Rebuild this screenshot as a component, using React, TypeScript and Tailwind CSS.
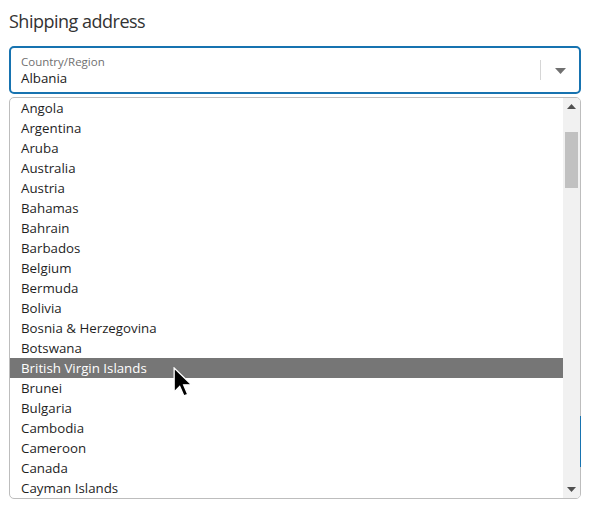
import React from "react";

const countries = [
  "Angola",
  "Argentina",
  "Aruba",
  "Australia",
  "Austria",
  "Bahamas",
  "Bahrain",
  "Barbados",
  "Belgium",
  "Bermuda",
  "Bolivia",
  "Bosnia & Herzegovina",
  "Botswana",
  "British Virgin Islands",
  "Brunei",
  "Bulgaria",
  "Cambodia",
  "Cameroon",
  "Canada",
  "Cayman Islands",
];

export default function App() {
  return (
    <div
      className="relative w-[589px] h-[508px] bg-white overflow-hidden"
      style={{ fontFamily: '"Open Sans", "Noto Sans", sans-serif' }}
    >
      <div className="pl-[9px] pr-[8px] pt-[9px]">
        <h2 className="text-[18px] leading-[24px] tracking-[-0.5px] text-[#333333] m-0">Shipping address</h2>
        <div className="mt-[13px] h-[48px] rounded-[5px] border-2 border-[#1773b0] flex items-center">
          <div className="flex-1 pl-[10px] flex flex-col">
            <span className="text-[11.5px] leading-[14px] text-[#707070] mt-[1px]">Country/Region</span>
            <span className="text-[13.3px] leading-[18px] text-[#1a1a1a]">Albania</span>
          </div>
          <div className="w-px h-[20px] bg-[#d6d6d6] mr-[14px]" />
          <svg width="11" height="6" viewBox="0 0 11 6" className="mr-[13px] mt-[1px]">
            <path d="M0 0 L11 0 L5.5 6 Z" fill="#707070" />
          </svg>
        </div>
        <div className="mt-[3px] h-[402px] rounded-[5px] border border-[#bdbdbd] flex overflow-hidden">
          <ul className="flex-1 m-0 p-0 list-none">
            {countries.map((c) => (
              <li
                key={c}
                className={
                  c === "British Virgin Islands"
                    ? "h-[20px] leading-[20px] pl-[11px] text-[13.3px] bg-[#767676] text-white"
                    : "h-[20px] leading-[20px] pl-[11px] text-[13.3px] text-[#1f1f1f]"
                }
              >
                {c}
              </li>
            ))}
          </ul>
          <div className="w-[17px] bg-[#f1f1f1] flex flex-col items-center">
            <div className="h-[17px] flex items-center justify-center">
              <svg width="9" height="5" viewBox="0 0 9 5">
                <path d="M0 5 L9 5 L4.5 0 Z" fill="#505050" />
              </svg>
            </div>
            <div className="mt-[17px] w-[13px] h-[56px] bg-[#c1c1c1]" />
            <div className="flex-1" />
            <div className="h-[17px] flex items-center justify-center">
              <svg width="9" height="5" viewBox="0 0 9 5">
                <path d="M0 0 L9 0 L4.5 5 Z" fill="#505050" />
              </svg>
            </div>
          </div>
        </div>
      </div>
      <div className="absolute left-[580px] top-[416px] w-px h-[51px] bg-[#1773b0]" />
      <svg
        className="absolute left-[173px] top-[367px]"
        width="20"
        height="30"
        viewBox="0 0 13.5 20.5"
      >
        <path
          d="M0.7 0.7 L0.7 17 L4.5 13.2 L7.4 19.8 L10 18.7 L7.2 12.2 L12.6 12.2 Z"
          fill="#000"
          stroke="#fff"
          strokeWidth="0.9"
          strokeLinejoin="miter"
        />
      </svg>
    </div>
  );
}
